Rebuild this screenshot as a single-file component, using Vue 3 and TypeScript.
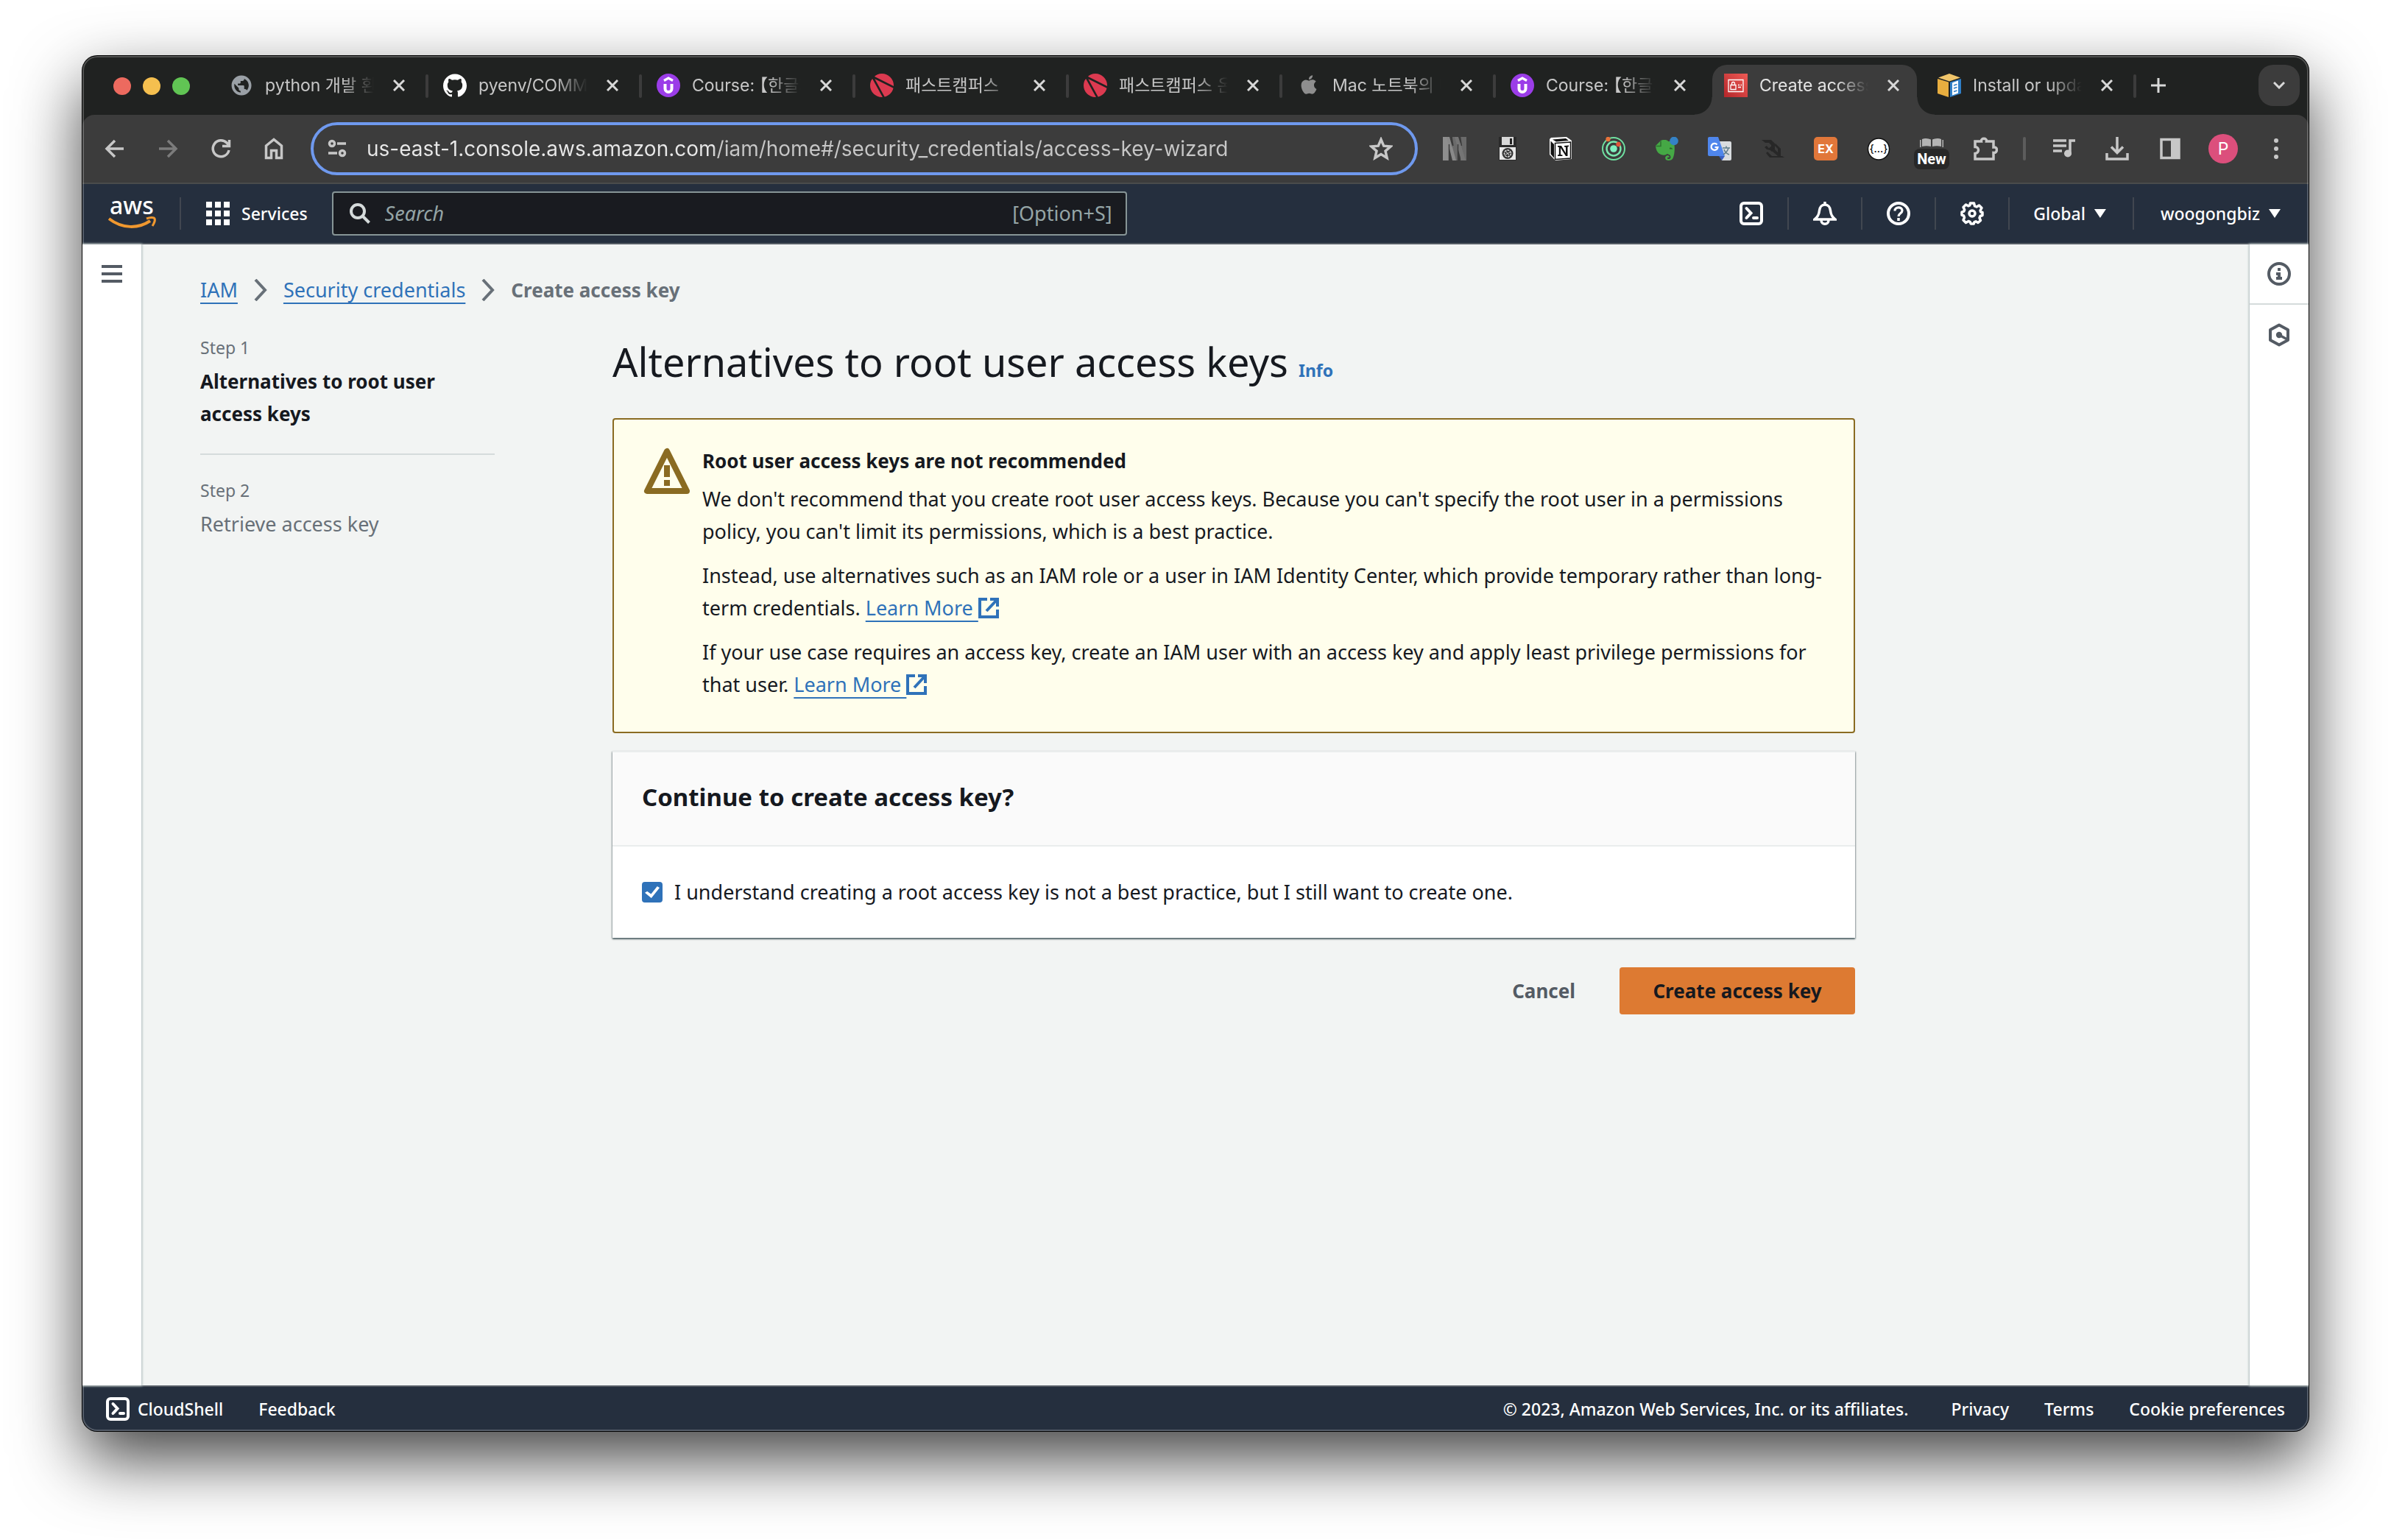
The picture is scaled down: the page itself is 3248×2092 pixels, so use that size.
<script setup lang="ts">
import { ref } from 'vue'

type Favicon = 'globe' | 'github' | 'udemy' | 'campus' | 'apple' | 'iam' | 'docs'

interface Tab {
  id: number
  icon: Favicon
  title: string
  active?: boolean
}

const tabs: Tab[] = [
  { id: 1, icon: 'globe', title: 'python 개발 환경' },
  { id: 2, icon: 'github', title: 'pyenv/COMMANDS' },
  { id: 3, icon: 'udemy', title: 'Course: 【한글자' },
  { id: 4, icon: 'campus', title: '패스트캠퍼스' },
  { id: 5, icon: 'campus', title: '패스트캠퍼스 온라인' },
  { id: 6, icon: 'apple', title: 'Mac 노트북의 비' },
  { id: 7, icon: 'udemy', title: 'Course: 【한글자' },
  { id: 8, icon: 'iam', title: 'Create access key', active: true },
  { id: 9, icon: 'docs', title: 'Install or update' },
]

const address = ref('us-east-1.console.aws.amazon.com/iam/home#/security_credentials/access-key-wizard')
const query = ref('')
const understood = ref(true)
</script>

<template>
  <div class="desktop">
    <div class="window">
      <!-- Tab strip -->
      <div class="tab-strip">
        <div class="lights">
          <button class="light red" aria-label="Close window"></button>
          <button class="light yellow" aria-label="Minimize window"></button>
          <button class="light green" aria-label="Zoom window"></button>
        </div>
        <ul class="tabs">
          <li v-for="(tab, i) in tabs" :key="tab.id" class="tab-slot">
            <div class="tab" :class="{ active: tab.active }">
              <svg v-if="tab.icon === 'globe'" class="favicon" viewBox="0 0 24 24" fill="#9aa0a6">
                <path transform="translate(1 1) scale(.92)" d="M12 1C5.9 1 1 5.9 1 12s4.900 11 11 11 11-4.900 11-11S18.100 1 12 1zm-1 18.930c-3.950-.49-7-3.850-7-7.930 0-.62.08-1.210.21-1.790L9 15v1c0 1.100.9 2 2 2v1.930zm6.900-2.540c-.26-.81-1-1.390-1.900-1.390h-1v-3c0-.55-.45-1-1-1H8v-2h2c.55 0 1-.45 1-1V7h2c1.100 0 2-.9 2-2v-.41c2.930 1.190 5 4.060 5 7.410 0 2.080-.8 3.970-2.100 5.390z" />
              </svg>
              <svg v-else-if="tab.icon === 'github'" class="favicon" viewBox="0 0 24 24" fill="#fff">
                <path d="M12 .297c-6.63 0-12 5.373-12 12 0 5.303 3.438 9.8 8.205 11.385.6.113.82-.258.82-.577 0-.285-.01-1.04-.015-2.04-3.338.724-4.042-1.61-4.042-1.61C4.422 18.07 3.633 17.7 3.633 17.7c-1.087-.744.084-.729.084-.729 1.205.084 1.838 1.236 1.838 1.236 1.07 1.835 2.809 1.305 3.495.998.108-.776.417-1.305.76-1.605-2.665-.3-5.466-1.332-5.466-5.93 0-1.31.465-2.38 1.235-3.22-.135-.303-.54-1.523.105-3.176 0 0 1.005-.322 3.3 1.23.96-.267 1.98-.399 3-.405 1.02.006 2.04.138 3 .405 2.28-1.552 3.285-1.23 3.285-1.23.645 1.653.24 2.873.12 3.176.765.84 1.23 1.91 1.23 3.22 0 4.61-2.805 5.625-5.475 5.92.42.36.81 1.096.81 2.22 0 1.606-.015 2.896-.015 3.286 0 .315.21.69.825.57C20.565 22.092 24 17.592 24 12.297c0-6.627-5.373-12-12-12" />
              </svg>
              <svg v-else-if="tab.icon === 'udemy'" class="favicon" viewBox="0 0 32 32">
                <circle cx="16" cy="16" r="16" fill="#9b3de8" />
                <path d="M10 9.500l6-3.500 6 3.500" fill="none" stroke="#fff" stroke-width="3.200" />
                <path d="M11.500 14v6.500a4.500 4.500 0 0 0 9 0V14" fill="none" stroke="#fff" stroke-width="4" />
              </svg>
              <svg v-else-if="tab.icon === 'campus'" class="favicon" viewBox="0 0 32 32">
                <circle cx="16" cy="16" r="16" fill="#dc3a50" />
                <path d="M3 4L33 19M3 4L19 33" stroke="#202221" stroke-width="2.600" />
                <path d="M0 0h9L5 5 1 9z" fill="#202221" />
              </svg>
              <svg v-else-if="tab.icon === 'apple'" class="favicon" viewBox="-3 -2 30 30" fill="#8e8e8e">
                <path d="M12.152 6.896c-.948 0-2.415-1.078-3.96-1.04-2.04.027-3.91 1.183-4.961 3.014-2.117 3.675-.546 9.103 1.519 12.09 1.013 1.454 2.208 3.09 3.792 3.039 1.52-.065 2.09-.987 3.935-.987 1.831 0 2.35.987 3.96.948 1.637-.026 2.676-1.48 3.676-2.948 1.156-1.688 1.636-3.325 1.662-3.415-.039-.013-3.182-1.221-3.22-4.857-.026-3.04 2.48-4.494 2.597-4.559-1.429-2.09-3.623-2.324-4.39-2.376-2-.156-3.675 1.09-4.61 1.09zM15.53 3.83c.843-1.012 1.4-2.427 1.245-3.83-1.207.052-2.662.805-3.532 1.818-.78.896-1.454 2.338-1.273 3.714 1.338.104 2.715-.688 3.559-1.701" />
              </svg>
              <svg v-else-if="tab.icon === 'iam'" class="favicon" viewBox="0 0 32 32">
                <defs>
                  <linearGradient id="iam-red" x1="0" y1="1" x2="1" y2="0">
                    <stop offset="0" stop-color="#b4262a" />
                    <stop offset="1" stop-color="#ee5a55" />
                  </linearGradient>
                </defs>
                <path fill="url(#iam-red)" d="M0 0h32v32H0z" />
                <path d="M6 8.500h20v16H6zM9 15.500h7v6H9zM10.500 15.500v-2a2 2 0 0 1 4 0v2M19 15.500h2M22.500 15.500H24M19 18.500h4" fill="none" stroke="#fff" stroke-width="1.300" />
              </svg>
              <svg v-else class="favicon" viewBox="0 0 32 32">
                <path fill="#f0c56a" d="M16 0l15 5.500-15 5L1 5.500z" />
                <path fill="#e8ae3f" d="M0 7l15 4.500V32L0 27z" />
                <path fill="#2f7fc8" d="M17 11.500L32 7v20l-15 5z" />
                <path fill="#fff" d="M20 12.500l8-3v17l-8 3z" />
                <path d="M22 16l4.500-1.500M22 20l4.500-1.500M22 24.500l4.500-1.500" stroke="#2f7fc8" stroke-width="1.800" />
              </svg>
              <span class="tab-title">{{ tab.title }}</span>
              <button class="tab-close" :aria-label="'Close tab ' + (i + 1)">
                <svg viewBox="0 0 16 16"><path d="M1 1l14 14M15 1L1 15" /></svg>
              </button>
            </div>
            <span class="tab-divider" :class="{ hidden: tab.active || (tabs[i + 1] && tabs[i + 1].active) }"></span>
          </li>
        </ul>
        <button class="new-tab" aria-label="New tab">
          <svg viewBox="0 0 20 20"><path d="M10 0v20M0 10h20" /></svg>
        </button>
        <button class="tab-search" aria-label="Search tabs">
          <svg viewBox="0 0 16 10"><path d="M1 1l7 7 7-7" /></svg>
        </button>
      </div>

      <!-- Toolbar -->
      <div class="toolbar">
        <div class="tools">
          <button class="tool" aria-label="Back">
            <svg viewBox="0 0 32 32"><path class="line" d="M28 16H6M16 5L5 16l11 11" /></svg>
          </button>
          <button class="tool dim" aria-label="Forward">
            <svg viewBox="0 0 32 32"><path class="line" d="M4 16h22M16 5l11 11-11 11" /></svg>
          </button>
          <button class="tool" aria-label="Reload">
            <svg viewBox="0 0 32 32"><path class="line" d="M27 18a11 11 0 1 1-3-10l2.500 3M27.500 4v8.500H18" /></svg>
          </button>
          <button class="tool" aria-label="Home">
            <svg viewBox="0 0 32 32"><path class="line" d="M5.500 28.500V12L16 3.500 26.500 12v16.500h-7V18.500h-7v10z" /></svg>
          </button>
        </div>

        <div class="omnibox">
          <button class="site-info" aria-label="View site information">
            <svg viewBox="0 0 28 28">
              <circle class="line" cx="7" cy="7" r="3.500" /><path class="line" d="M14 7h12M2 20h12" />
              <circle class="line" cx="21" cy="20" r="3.500" />
            </svg>
          </button>
          <input v-model="address" class="address" type="text" aria-label="Address and search bar" />
          <button class="bookmark" aria-label="Bookmark this tab">
            <svg viewBox="0 0 32 32"><path class="line" d="M16 3.500l3.700 8.700 9.300.8-7 6.200 2.100 9.300-8.100-4.900-8.100 4.900L10 19.200 3 13l9.300-.8z" /></svg>
          </button>
        </div>

        <div class="tools">
          <button class="tool" aria-label="N extension">
            <svg viewBox="0 0 32 32">
              <path fill="#8e8e8e" d="M0 0h8v32H0z" />
              <path fill="#6a6a6a" d="M13 0h7v32h-7zM24 0h8v32h-8z" />
              <path fill="#8a8a8a" d="M5 0h4l9 32h-5z" />
              <path fill="#757575" d="M16 0h5l10 32h-6z" />
              <path stroke="#3c3c3c" stroke-width="1.500" d="M8.500 10v22M12 0l2 12M20.500 10v22M23.500 0l2 12" />
            </svg>
          </button>
          <button class="tool" aria-label="Disk extension">
            <svg viewBox="0 0 32 32">
              <path fill="#2a2a2a" d="M4 0h24v32H4z" /><path fill="#d8d8d8" d="M8 0h16v11H8z" />
              <path fill="#222" d="M19 2h3v8h-3z" /><path fill="#e8e8e8" d="M5 14h22v17H5z" />
              <circle cx="16" cy="22.500" r="7.500" fill="#333" />
              <circle cx="16" cy="22.500" r="4.500" fill="none" stroke="#ddd" stroke-width="1.500" stroke-dasharray="3 1" />
              <path d="M13 24l6-3M14 20l4 5" stroke="#ddd" />
            </svg>
          </button>
          <button class="tool" aria-label="Notion">
            <svg viewBox="0 0 32 32">
              <path fill="#fff" d="M3 1l21-1 7 5v25l-22 2-8-8V3z" />
              <path fill="#111" d="M2.500 5.500L7 10v18.500l-4.500-5.200zM5 3.500L23 2l4 3L10 6.500z" />
              <path fill="none" stroke="#111" stroke-width="1.500" d="M8.500 8.500l21-1.500v22l-21 1.500z" />
              <path fill="#111" d="M12 12h5l6 10v-8l-2-.5v-1.500l6-.5V13l-1.500.5V26H23l-7-11v9l2.500.5V26H12v-1.500l1.800-.5V14L12 13.500z" />
            </svg>
          </button>
          <button class="tool" aria-label="Orbit extension">
            <svg viewBox="0 0 32 32" fill="none" stroke-width="2">
              <circle cx="16" cy="16" r="15" stroke="#6fe0a0" /><circle cx="16" cy="16" r="9.500" stroke="#78e8ae" stroke-width="2.400" />
              <circle cx="16" cy="16" r="4.800" fill="#7ff0c0" /><circle cx="8.500" cy="3" r="3.200" fill="#e8733a" />
              <circle cx="22.500" cy="10" r="3.200" fill="#e0553a" />
            </svg>
          </button>
          <button class="tool" aria-label="Evernote">
            <svg viewBox="0 0 32 32">
              <path fill="#45a845" d="M1 12l7-7c1-1 9-2 10 1 5 0 8 1 8.500 5 .8 6 0 14-2 18-1 2-3 3-6 3-4 0-5-3-4-5 1-2 4-2 5-1v2c-2-.5-2.500 0-2.500 1.200 1 1.500 4 1 4.500-1.200 0-4-2-4-5-5-1.500 2-5 2-8 1-4-1.500-7-5-7.500-12z" />
              <path d="M1.500 12.500h6.500V5.500" fill="none" stroke="#2f7030" stroke-width="1.500" /><path fill="#2b5f2b" d="M20 15c2-1 4 0 4 2-1-.6-3-.6-4-.4z" />
              <circle cx="26" cy="5.500" r="5.800" fill="#3482c6" />
            </svg>
          </button>
          <button class="tool" aria-label="Translate">
            <svg viewBox="0 0 32 32">
              <path fill="#d9dcdf" d="M14 6h16a2 2 0 0 1 2 2v22a2 2 0 0 1-2 2H19z" />
              <path fill="#3a5fc0" d="M15 26h8l-4 6z" />
              <path fill="#4f86ec" d="M2 0h12l9 26H2a2 2 0 0 1-2-2V2a2 2 0 0 1 2-2z" />
              <path d="M12.500 10.500a4.500 4.500 0 1 0 1 3.500H9.500" fill="none" stroke="#fff" stroke-width="2.200" />
              <path d="M20 15h10M25 12.500V15M28 15c-1 4-4 7-7 9M22 17c1 3 4 6 7 7" fill="none" stroke="#607d8b" stroke-width="1.500" />
            </svg>
          </button>
          <button class="tool" aria-label="Socket extension">
            <svg viewBox="0 0 32 32" fill="#272727">
              <path d="M1 4h13l5 5v8l-4 3-5-4 4-3v-2l-3-3H6zM8 12l5 6-5-1-3-3z" />
              <path d="M20 9l7 7v10h-4l-9-8 3-3 6 6v-5l-5-5zM9 20l6 6h14l3 2H12l-5-6z" />
            </svg>
          </button>
          <button class="tool" aria-label="EX extension">
            <svg viewBox="0 0 32 32">
              <rect width="32" height="32" rx="5" fill="#e1773a" />
              <text x="16" y="21.500" text-anchor="middle" font-family="Inter, sans-serif" font-weight="700" font-size="16" fill="#fff">EX</text>
            </svg>
          </button>
          <button class="tool" aria-label="JSON viewer">
            <svg viewBox="0 0 32 32">
              <circle cx="16" cy="16.500" r="14.500" fill="#fff" stroke="#111" stroke-width="1.500" />
              <text x="16" y="21" text-anchor="middle" font-family="Inter, sans-serif" font-weight="500" font-size="14" fill="#111">{...}</text>
            </svg>
          </button>
          <button class="tool badge-host" aria-label="Reader extension">
            <svg viewBox="0 0 32 32">
              <path fill="#b4b4b4" d="M3 3c4-2 9-1 12 .5V13c-4-1-8-1-12 0zM17 3.500C20 2 25 1 29 3v10c-4-1-8-1-12 0zM0 4h1.500v10H0zM30.500 4H32v10h-1.500z" />
            </svg>
            <span class="badge">New</span>
          </button>
          <button class="tool" aria-label="Extensions">
            <svg class="big" viewBox="0 0 36 36">
              <path class="line" d="M5 8h8.500c-1-5 8-5 7 0H30v8c6-1 6 8 0 7.500V32H5v-7.500c6-.5 6-9 0-9z" />
            </svg>
          </button>
          <span class="tool-divider"></span>
          <button class="tool" aria-label="Media controls">
            <svg viewBox="0 0 32 32"><path class="line" d="M1 5h18M1 12h18M1 19h12M24 24V5h7" /><circle cx="21" cy="22.500" r="5" fill="#c7c7c7" /></svg>
          </button>
          <button class="tool" aria-label="Downloads">
            <svg viewBox="0 0 32 32"><path class="line" d="M16 0v21M8 13.500l8 8 8-8M2 22v8h28v-8" /></svg>
          </button>
          <button class="tool" aria-label="Side panel">
            <svg viewBox="0 0 32 32"><path class="line" d="M4 3.500h24v25H4z" /><path fill="#c7c7c7" d="M17 3h12v26H17z" /></svg>
          </button>
          <button class="tool" aria-label="Profile"><span class="avatar">P</span></button>
          <button class="tool" aria-label="Menu">
            <svg viewBox="0 0 32 32" fill="#c7c7c7"><circle cx="16" cy="5" r="3" /><circle cx="16" cy="16" r="3" /><circle cx="16" cy="27" r="3" /></svg>
          </button>
        </div>
      </div>

      <!-- Console header -->
      <header class="console-nav">
        <a class="logo" href="#" aria-label="AWS home">
          <svg viewBox="0 0 66 42">
            <text x="2" y="22" font-family="Noto Sans, sans-serif" font-weight="500" font-size="32" fill="#fff">aws</text>
            <path fill="none" stroke="#f0982f" stroke-width="4" d="M1 28c18 14 40 14 56 3" />
            <path fill="none" stroke="#f0982f" stroke-width="3" d="M52 28c5-2 10-2 11 0s-1 7-3 10" />
          </svg>
        </a>
        <span class="nav-rule"></span>
        <button class="services">
          <svg viewBox="0 0 32 32" fill="#fff">
            <path d="M0 0h8v8H0zM12 0h8v8h-8zM24 0h8v8h-8zM0 12h8v8H0zM12 12h8v8h-8zM24 12h8v8h-8zM0 24h8v8H0zM12 24h8v8h-8zM24 24h8v8h-8z" />
          </svg>
          Services
        </button>
        <label class="search">
          <svg viewBox="0 0 28 28"><circle cx="11" cy="11" r="9" /><path d="M17.500 17.500l9 9" /></svg>
          <input v-model="query" type="text" placeholder="Search" aria-label="Search" />
          <span class="shortcut">[Option+S]</span>
        </label>
        <div class="nav-end">
          <button class="nav-icon" aria-label="CloudShell">
            <svg viewBox="0 0 32 32"><rect x="2" y="2" width="28" height="28" rx="4" /><path d="M9.500 9l6 6.500-6 6.500M19 22h5" stroke-linecap="round" /></svg>
          </button>
          <button class="nav-icon" aria-label="Notifications">
            <svg viewBox="0 0 32 32"><path d="M2 24c5-4 6-7 6.500-12C9 7 12 4 16 4s7 3 7.500 8c.5 5 1.500 8 6.500 12zM16 4V0M11 25c0 7 10 7 10 0" stroke-width="3.500" /></svg>
          </button>
          <button class="nav-icon" aria-label="Help">
            <svg viewBox="0 0 32 32"><circle cx="16" cy="16" r="14" /><path d="M11 12.500c0-6 10-6 10-.5 0 4-5 3.500-5 8" stroke-width="3.200" /><path d="M16 22v4" stroke-width="3.500" /></svg>
          </button>
          <button class="nav-icon" aria-label="Settings">
            <svg viewBox="0 0 32 32">
              <path stroke-width="3.500" stroke-linejoin="round" d="M13.500 2h5l1 4 2.500 1 3.500-2L29 8.500 27 12l.7 2 2.300.5v4l-3 1-1 2.500 1.500 3.500L24 28.500l-3-1.700-2 .8-.8 2.400h-4l-1-2.700-2.200-.8L7.500 28.500 4 25l1.500-3.500L4.600 19 2 18.200v-4l2.700-1L5.700 11 4 7.500 7.500 4l3.300 1.800 2-.8z" />
              <circle cx="16" cy="16" r="4" stroke-width="3.500" />
            </svg>
          </button>
          <button class="nav-menu">Global <span class="caret"></span></button>
          <button class="nav-menu account">woogongbiz <span class="caret"></span></button>
        </div>
      </header>

      <!-- Page -->
      <div class="page">
        <aside class="rail left">
          <button class="hamburger" aria-label="Open navigation"><i></i><i></i><i></i></button>
        </aside>

        <main class="content">
          <nav class="crumbs" aria-label="Breadcrumbs">
            <a href="#">IAM</a>
            <svg viewBox="0 0 18 30"><path d="M2 1l13 14L2 29" /></svg>
            <a href="#">Security credentials</a>
            <svg viewBox="0 0 18 30"><path d="M2 1l13 14L2 29" /></svg>
            <strong>Create access key</strong>
          </nav>

          <div class="wizard">
            <ol class="steps">
              <li>
                <div class="step-no">Step 1</div>
                <div class="step-name current">Alternatives to root user access keys</div>
              </li>
              <li>
                <div class="step-no">Step 2</div>
                <div class="step-name">Retrieve access key</div>
              </li>
            </ol>

            <section class="form">
              <h1>Alternatives to root user access keys <a href="#" class="info">Info</a></h1>

              <div class="alert" role="alert">
                <svg viewBox="0 0 64 64">
                  <path d="M32 5L5 59h54z" fill="none" stroke="#8a6b22" stroke-width="8" stroke-linejoin="round" />
                  <path d="M32 24v16M32 44v8" stroke="#8a6b22" stroke-width="8" />
                </svg>
                <div class="alert-text">
                  <h3>Root user access keys are not recommended</h3>
                  <p>We don't recommend that you create root user access keys. Because you can't specify the root user in a permissions policy, you can't limit its permissions, which is a best practice.</p>
                  <p>Instead, use alternatives such as an IAM role or a user in IAM Identity Center, which provide temporary rather than long-term credentials. <a href="#">Learn More <svg class="ext" viewBox="0 0 28 28"><path d="M12 2H2v24h24V16" /><path d="M16 2h10v10M25 3L11 18" /></svg></a></p>
                  <p>If your use case requires an access key, create an IAM user with an access key and apply least privilege permissions for that user. <a href="#">Learn More <svg class="ext" viewBox="0 0 28 28"><path d="M12 2H2v24h24V16" /><path d="M16 2h10v10M25 3L11 18" /></svg></a></p>
                </div>
              </div>

              <div class="panel">
                <h2>Continue to create access key?</h2>
                <div class="panel-body">
                  <input id="understood" v-model="understood" type="checkbox" />
                  <label for="understood">I understand creating a root access key is not a best practice, but I still want to create one.</label>
                </div>
              </div>

              <div class="actions">
                <button class="btn">Cancel</button>
                <button class="btn primary">Create access key</button>
              </div>
            </section>
          </div>
        </main>

        <aside class="rail right">
          <button aria-label="Info panel">
            <svg viewBox="0 0 32 32"><circle cx="16" cy="16" r="14" fill="none" stroke="#545b64" stroke-width="4" /><path fill="#545b64" d="M14 8h4v4h-4zM12 14h6v6h2v4h-8v-4h2v-2h-2z" /></svg>
          </button>
          <button aria-label="Diagnostics panel">
            <svg viewBox="0 0 32 32"><path d="M16 2.500l12 6.500v14l-12 6.500L4 23V9z" fill="none" stroke="#545b64" stroke-width="4" stroke-linejoin="round" /><circle cx="16" cy="16" r="4.200" fill="#545b64" /><path d="M16 16l11 6" stroke="#545b64" stroke-width="3.500" /></svg>
          </button>
        </aside>
      </div>

      <!-- Footer -->
      <footer class="footer">
        <button class="shell">
          <svg viewBox="0 0 32 32"><rect x="2" y="2" width="28" height="28" rx="4" /><path d="M9.500 9l6 6.500-6 6.500M19 22h5" stroke-linecap="round" /></svg>
          CloudShell
        </button>
        <a href="#" class="feedback">Feedback</a>
        <span class="copyright">© 2023, Amazon Web Services, Inc. or its affiliates.</span>
        <a href="#">Privacy</a>
        <a href="#">Terms</a>
        <a href="#">Cookie preferences</a>
      </footer>
    </div>
  </div>
</template>

<style>
body {
  background: #fff;
}
</style>

<style scoped>
.desktop {
  box-sizing: border-box;
  display: flex;
  min-height: 100vh;
  padding: 76px 112px 148px;
  font-family: "Noto Sans", "Noto Sans CJK KR", sans-serif;
  font-size: 27px;
  line-height: 44px;
  color: #16191f;
}

*,
*::before,
*::after {
  box-sizing: border-box;
}

button {
  display: flex;
  align-items: center;
  justify-content: center;
  padding: 0;
  border: 0;
  background: none;
  color: inherit;
  font: inherit;
}

svg {
  display: block;
  flex: none;
}

.window {
  position: relative;
  display: flex;
  flex: 1;
  flex-direction: column;
  min-width: 0;
  overflow: hidden;
  border-radius: 20px;
  background: #202221;
  box-shadow: 0 0 0 1px #000, 0 38px 90px rgba(0, 0, 0, 0.74);
}

/* Light bevel that macOS draws round dark windows */
.window::after {
  content: "";
  position: absolute;
  inset: 0;
  border-radius: 20px;
  box-shadow: inset 0 0 0 2px rgba(255, 255, 255, 0.22);
  pointer-events: none;
}

/* Tab strip */
.tab-strip {
  display: flex;
  flex: none;
  height: 80px;
  padding: 12px 12px 0 42px;
  font: 23px/32px Inter, "Noto Sans CJK KR", sans-serif;
  color: #c7c7c7;
}

.lights {
  display: flex;
  gap: 16px;
  width: 138px;
  flex: none;
  height: 58px;
  align-items: center;
}

.light {
  width: 24px;
  height: 24px;
  border-radius: 50%;
}

.red { background: #ed6a5f; }
.yellow { background: #f5bf4f; }
.green { background: #61c554; }

.tabs {
  display: flex;
  margin: 0;
  padding: 0;
  list-style: none;
  min-width: 0;
}

.tab-slot {
  display: flex;
  width: 290px;
  min-width: 0;
  padding-left: 4px;
}

.tab {
  position: relative;
  display: flex;
  flex: 1;
  align-items: center;
  min-width: 0;
  height: 68px;
  padding: 0 10px 12px 16px;
  border-radius: 20px 20px 0 0;
}

.tab.active {
  background: #3c3c3c;
  color: #e3e3e3;
}

.tab.active::before,
.tab.active::after {
  content: "";
  position: absolute;
  bottom: 0;
  width: 24px;
  height: 24px;
}

.tab.active::before {
  right: 100%;
  background: radial-gradient(circle at 0 0, transparent 23px, #3c3c3c 24px);
}

.tab.active::after {
  left: 100%;
  background: radial-gradient(circle at 100% 0, transparent 23px, #3c3c3c 24px);
}

.favicon {
  width: 32px;
  height: 32px;
}

.tab-title {
  flex: 1;
  min-width: 0;
  margin: 0 12px 0 16px;
  overflow: hidden;
  white-space: nowrap;
  font-feature-settings: "halt";
  mask-image: linear-gradient(to right, #000 calc(100% - 44px), transparent);
}

.tab-close {
  width: 44px;
  height: 44px;
  flex: none;
}

.tab-close svg {
  width: 16px;
  height: 16px;
}

.tab-close path,
.new-tab path,
.tab-search path {
  fill: none;
  stroke: #d8d8d8;
  stroke-width: 3;
}

.tab-divider {
  width: 4px;
  height: 32px;
  margin: 13px 0 0 4px;
  border-radius: 2px;
  background: #3c3c3c;
}

.tab-divider.hidden {
  visibility: hidden;
}

.new-tab {
  width: 60px;
  height: 56px;
  flex: none;
}

.new-tab svg {
  width: 20px;
  height: 20px;
}

.tab-search {
  width: 56px;
  height: 56px;
  margin-left: auto;
  border-radius: 20px;
  background: #3c3c3c;
  flex: none;
}

.tab-search svg {
  width: 16px;
  height: 10px;
}

/* Toolbar */
.toolbar {
  display: flex;
  flex: none;
  align-items: center;
  gap: 14px;
  height: 94px;
  padding: 0 8px;
  border-bottom: 2px solid #4a4c4b;
  border-radius: 16px 16px 0 0;
  background: #3c3c3c;
  color: #c7c7c7;
}

.tools {
  display: flex;
  flex: none;
  align-items: center;
}

.tool {
  width: 72px;
  height: 72px;
}

.tool svg {
  width: 32px;
  height: 32px;
}

.tool svg.big {
  width: 36px;
  height: 36px;
}

.line {
  fill: none;
  stroke: #c7c7c7;
  stroke-width: 3.5;
}

.dim .line {
  stroke: #7c7c7c;
}

.tool-divider {
  width: 4px;
  height: 32px;
  margin: 0 16px;
  border-radius: 2px;
  background: #5c5c5c;
}

.omnibox {
  display: flex;
  flex: 1;
  align-items: center;
  min-width: 0;
  height: 72px;
  padding: 0 30px 0 18px;
  border: 4px solid #6f99ee;
  border-radius: 36px;
}

.site-info svg {
  width: 28px;
  height: 28px;
}

.bookmark svg {
  width: 32px;
  height: 32px;
}

.address {
  flex: 1;
  min-width: 0;
  margin-left: 26px;
  padding: 0;
  border: 0;
  outline: 0;
  background: linear-gradient(to right, #e8e8e8 472px, #c7c7c7 472px) text;
  color: #d8d8d8;
  -webkit-text-fill-color: transparent;
  font: 28px/40px Inter, sans-serif;
}

.badge-host {
  position: relative;
}

.badge {
  position: absolute;
  left: 12px;
  top: 36px;
  width: 48px;
  border-radius: 8px;
  background: #282828;
  color: #fff;
  font: 700 20px/28px Roboto, sans-serif;
  text-align: center;
}

.avatar {
  width: 40px;
  height: 40px;
  border-radius: 50%;
  background: #dc4f7c;
  color: #fff;
  font: 23px/40px Inter, sans-serif;
}

/* Console header */
.console-nav {
  display: flex;
  flex: none;
  align-items: center;
  height: 82px;
  padding-left: 35px;
  border-bottom: 2px solid #545b64;
  background: #252f3e;
  color: #fff;
  font-size: 23px;
  font-weight: 500;
}

.logo svg {
  width: 66px;
  height: 42px;
}

.nav-rule {
  width: 2px;
  height: 44px;
  margin: 0 34px 0 31px;
  background: #414750;
}

.services {
  gap: 16px;
}

.services svg {
  width: 32px;
  height: 32px;
}

.search {
  display: flex;
  align-items: center;
  flex: 0 1 1080px;
  min-width: 0;
  height: 60px;
  margin-left: 33px;
  padding: 0 18px 0 22px;
  border: 2px solid #879596;
  border-radius: 4px;
  background: #191b20;
  color: #95a5a6;
  font-size: 27px;
  font-weight: 400;
}

.search svg {
  width: 28px;
  height: 28px;
  fill: none;
  stroke: #d5dbdb;
  stroke-width: 4;
}

.search input {
  flex: 1;
  min-width: 0;
  margin-left: 20px;
  padding: 0;
  border: 0;
  outline: 0;
  background: none;
  color: #fff;
  font: inherit;
}

.search input::placeholder {
  color: #95a5a6;
  font-style: italic;
  opacity: 1;
}

.nav-end {
  display: flex;
  align-items: center;
  margin-left: auto;
}

.nav-icon,
.nav-menu {
  height: 44px;
}

.nav-icon {
  width: 100px;
  border-right: 2px solid #414750;
}

.nav-icon svg,
.shell svg {
  width: 32px;
  height: 32px;
  fill: none;
  stroke: #fff;
  stroke-width: 4;
}

.nav-menu {
  gap: 12px;
  padding: 0 36px 0 32px;
}

.nav-menu.account {
  padding: 0 38px 0 36px;
  border-left: 2px solid #414750;
}

.caret {
  width: 16px;
  height: 12px;
  background: #fff;
  clip-path: polygon(0 0, 100% 0, 50% 100%);
}

/* Page */
.page {
  display: flex;
  flex: 1;
  background: #f2f4f3;
}

.rail {
  z-index: 1;
  width: 80px;
  flex: none;
  background: #fff;
  box-shadow: 0 0 3px 1px #aab7b8;
}

.rail button {
  width: 100%;
  height: 80px;
}

.rail.right button + button {
  height: 84px;
  border-top: 2px solid #d5dbdb;
}

.rail svg {
  width: 32px;
  height: 32px;
}

.rail .hamburger {
  flex-direction: column;
  gap: 6px;
}

.hamburger i {
  width: 28px;
  height: 4px;
  background: #545b64;
}

.content {
  flex: 1;
  min-width: 0;
  padding: 40px 80px;
}

a {
  color: #2f72b9;
  text-decoration: underline 2px;
  text-underline-offset: 7px;
  text-decoration-skip-ink: none;
}

.crumbs {
  display: flex;
  align-items: center;
  gap: 22px;
  height: 44px;
  margin-bottom: 36px;
}

.crumbs svg {
  width: 18px;
  height: 30px;
  fill: none;
  stroke: #687078;
  stroke-width: 4;
}

.crumbs strong {
  color: #687078;
  font-size: 26px;
}

.wizard {
  display: flex;
  gap: 160px;
}

.steps {
  flex: 0 0 400px;
  margin: 0;
  padding: 0;
  list-style: none;
}

.steps li + li {
  margin-top: 32px;
  padding-top: 28px;
  border-top: 2px solid #d5dbdb;
}

.step-no {
  margin-bottom: 4px;
  color: #687078;
  font-size: 23px;
  line-height: 40px;
}

.step-name {
  color: #687078;
}

.step-name.current {
  padding-right: 60px;
  color: #16191f;
  font-size: 26px;
  font-weight: 700;
}

.form {
  flex: 0 1 1688px;
  min-width: 0;
}

h1 {
  margin: 0 0 38px;
  font-size: 54px;
  font-weight: 400;
  line-height: 78px;
}

.info {
  font-size: 23px;
  font-weight: 700;
  line-height: 32px;
  text-decoration: none;
}

.alert {
  display: flex;
  gap: 16px;
  padding: 34px 28px 42px 40px;
  border: 2px solid #8a6b22;
  border-radius: 4px;
  background: #fffeec;
}

.alert > svg {
  width: 64px;
  height: 64px;
  margin-top: 4px;
}

h3 {
  margin: 0 0 8px;
  font-size: 26px;
  line-height: 44px;
}

p {
  margin: 0;
}

p + p {
  margin-top: 16px;
}

.ext {
  display: inline-block;
  width: 28px;
  height: 28px;
  vertical-align: -4px;
  fill: none;
  stroke: #2f72b9;
  stroke-width: 4;
}

.panel {
  margin-top: 24px;
  border-top: 2px solid #eaeded;
  background: #fff;
  box-shadow: 0 2px 2px 0 rgba(0, 28, 36, 0.5), 1px 1px 2px 0 rgba(0, 28, 36, 0.25), -1px 1px 2px 0 rgba(0, 28, 36, 0.25);
}

h2 {
  margin: 0;
  padding: 38px 40px 42px;
  border-bottom: 2px solid #eaeded;
  background: #fafafa;
  font-size: 33px;
  line-height: 46px;
}

.panel-body {
  display: flex;
  align-items: center;
  gap: 16px;
  padding: 40px;
}

.panel-body input {
  position: relative;
  width: 28px;
  height: 28px;
  margin: 0;
  appearance: none;
  border: 2px solid #687078;
  border-radius: 4px;
}

.panel-body input:checked {
  border-color: #2f72b9;
  background: #2f72b9;
}

.panel-body input:checked::before {
  content: "";
  position: absolute;
  inset: 4px 2px;
  background: #fff;
  clip-path: polygon(0 55%, 16% 42%, 42% 66%, 84% 0, 100% 12%, 44% 100%);
}

.actions {
  display: flex;
  justify-content: flex-end;
  gap: 16px;
  margin-top: 40px;
}

.btn {
  height: 64px;
  padding: 0 44px;
  border-radius: 4px;
  color: #545b64;
  font-size: 26px;
  font-weight: 700;
}

.btn.primary {
  min-width: 320px;
  background: #dd7a32;
  color: #16191f;
}

/* Footer */
.footer {
  display: flex;
  flex: none;
  align-items: center;
  gap: 48px;
  height: 62px;
  padding: 0 32px;
  border-top: 2px solid #545b64;
  background: #252f3e;
  color: #fff;
  font-size: 23px;
  font-weight: 500;
}

.footer a {
  color: #fff;
  text-decoration: none;
}

.shell {
  gap: 11px;
}

.copyright {
  margin: 0 10px 0 auto;
}
</style>
